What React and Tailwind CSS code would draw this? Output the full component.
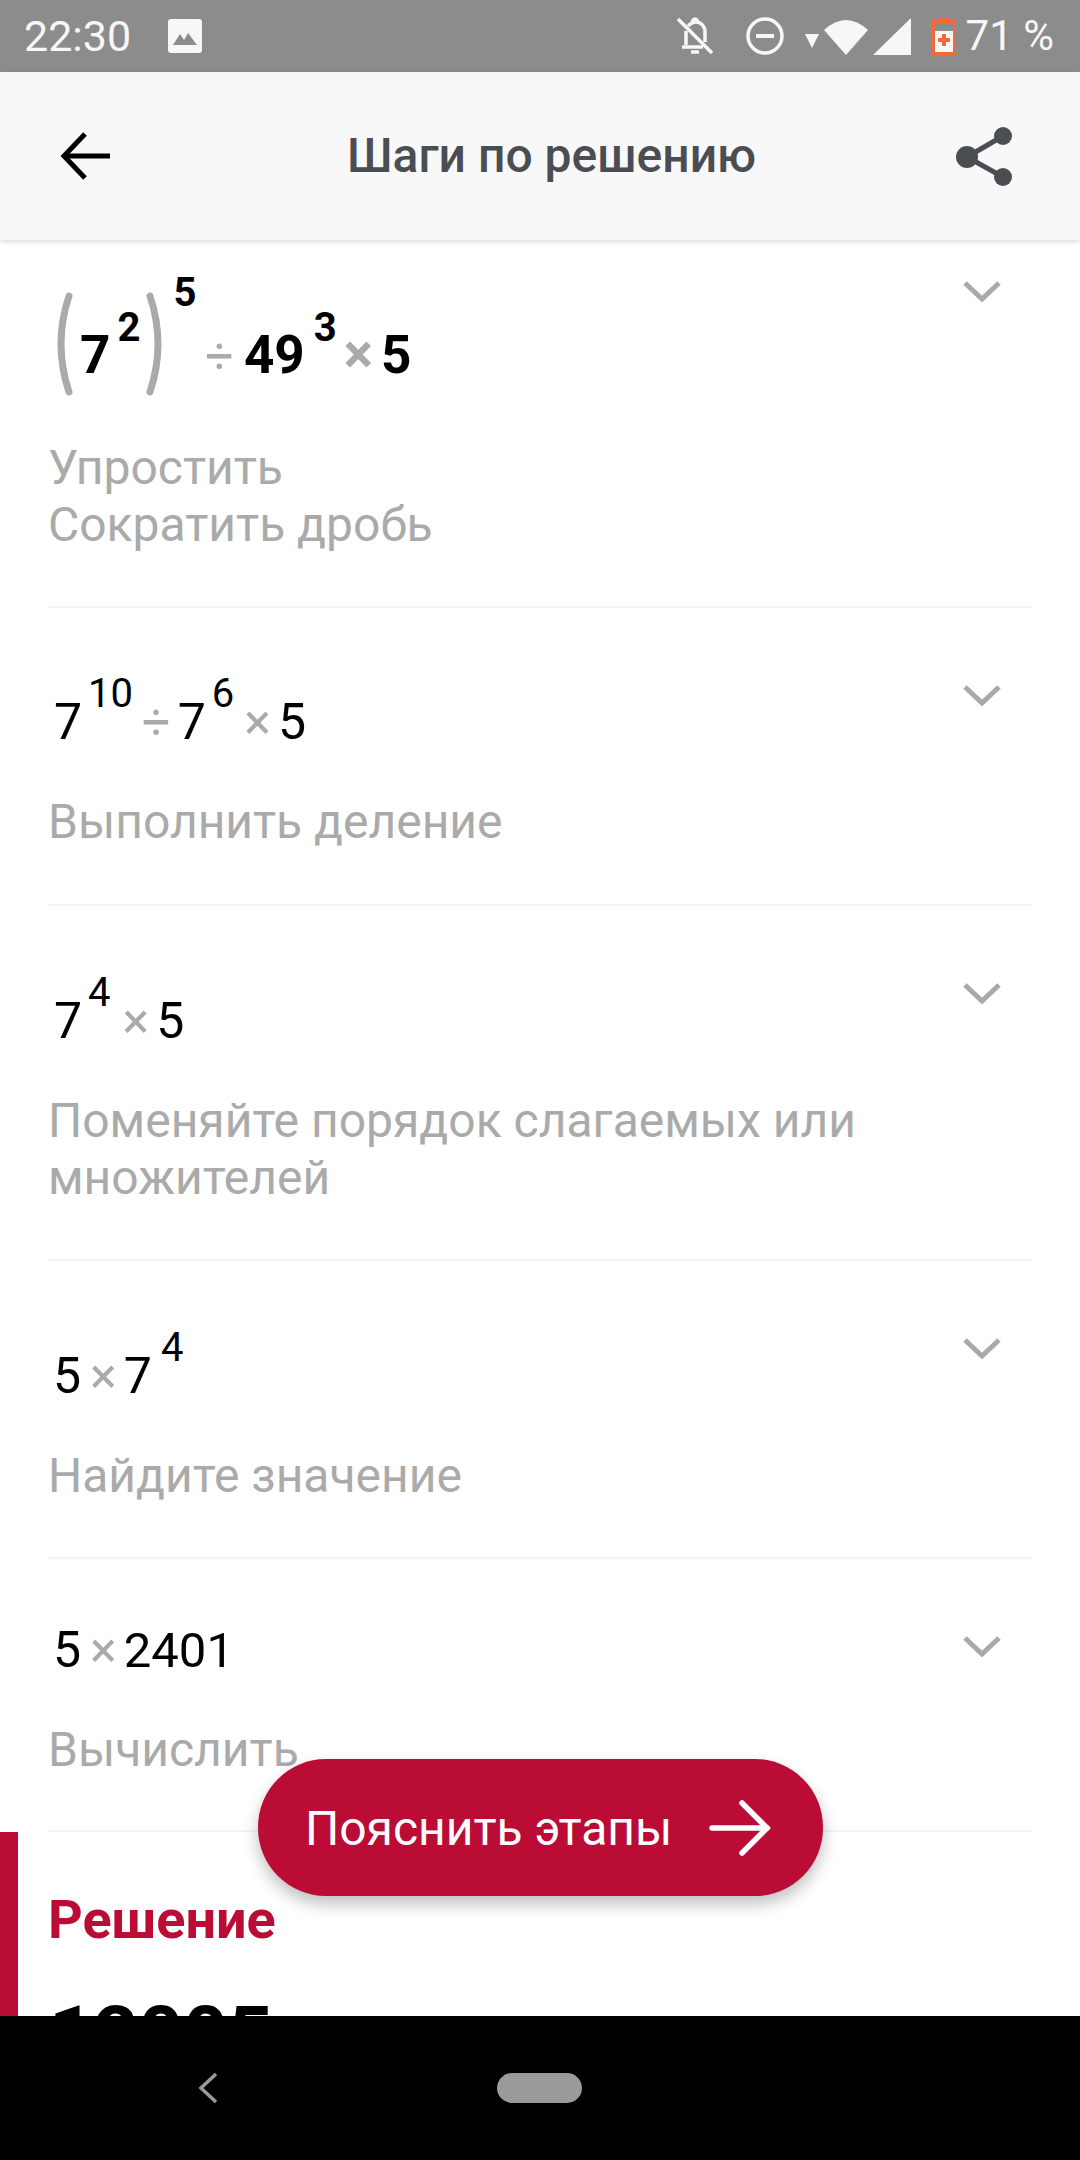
// App.jsx
function Chevron() {
  return (
    <svg width="40" height="22" viewBox="0 0 40 22" fill="none" className="mt-[76px] mr-[29px] shrink-0">
      <path d="M3 3 L20 19 L37 3" stroke="#a9a9a9" strokeWidth="5" />
    </svg>
  );
}

// superscript: sits on the same baseline, lifted up
function Sup({ children, bold, high, className = "" }) {
  return (
    <span
      className={`text-[40px] ${bold ? "font-bold" : ""} ${high ? "-translate-y-[67px]" : "-translate-y-[32px]"} ${className}`}
    >
      {children}
    </span>
  );
}

function Op({ children, className = "" }) {
  return <span className={`text-[#aaaaaa] text-[50px] ${className}`}>{children}</span>;
}

function Math({ children, className = "" }) {
  return (
    <div className={`flex items-baseline ml-[5px] text-black leading-[50px] ${className}`}>
      {children}
    </div>
  );
}

function Desc({ children, className = "" }) {
  return <p className={`-ml-[1px] text-[#aaaaaa] text-[48px] leading-[57px] ${className}`}>{children}</p>;
}

function Row({ children, className = "" }) {
  return (
    <section className={`mx-[49px] flex justify-between border-b-2 border-[#f3f3f3] ${className}`}>
      <div>{children}</div>
      <Chevron />
    </section>
  );
}

function Paren({ flip }) {
  return (
    <svg
      width="19"
      height="104"
      viewBox="0 0 19 104"
      fill="none"
      className={`translate-y-[23px] ${flip ? "-scale-x-100" : ""}`}
    >
      <path d="M15 4 Q-1 52 15 100" stroke="#aaaaaa" strokeWidth="7" strokeLinecap="round" />
    </svg>
  );
}

function StatusBar() {
  return (
    <div className="flex h-[72px] shrink-0 items-center bg-[#8c8c8c] pl-[24px] pr-[26px] text-[#f7f7f7]">
      <span className="text-[43px] leading-[72px]">22:30</span>
      <svg width="34" height="34" viewBox="0 0 34 34" className="ml-[37px]">
        <rect width="34" height="34" rx="3" fill="#f7f7f7" />
        <path d="M5 26 L12 15 L16 21 L20 14 L29 26 Z" fill="#8c8c8c" />
      </svg>
      <div className="ml-auto flex items-center">
        <svg width="38" height="38" viewBox="0 0 38 38" fill="none" stroke="#f7f7f7" strokeWidth="3.5">
          <path d="M2 2 L36 36" />
          <path d="M10 28 V14 M12 9 Q18 3 24 6 Q29 9 29 15 V25" />
          <path d="M6 30 H27" />
          <path d="M15 35 H23" />
          <path d="M16 5 Q19 -1 22 5" />
        </svg>
        <svg width="38" height="38" viewBox="0 0 38 38" fill="none" stroke="#f7f7f7" strokeWidth="3.5" className="ml-[32px]">
          <circle cx="19" cy="19" r="17" />
          <path d="M10 19 H28" strokeWidth="4" />
        </svg>
        <svg width="14" height="14" viewBox="0 0 14 14" className="ml-[21px] mt-[10px]">
          <path d="M0 0 H14 L7 14 Z" fill="#f7f7f7" />
        </svg>
        <svg width="44" height="37" viewBox="0 0 44 37" className="ml-[5px]">
          <path d="M0 12 Q22 -8 44 12 L22 37 Z" fill="#f7f7f7" />
        </svg>
        <svg width="38" height="37" viewBox="0 0 38 37" className="ml-[5px]">
          <path d="M38 0 V37 H0 Z" fill="#f7f7f7" />
        </svg>
        <svg width="24" height="38" viewBox="0 0 24 38" className="ml-[21px]">
          <path d="M7 0 H17 V3 H24 V38 H0 V3 H7 Z" fill="#f4693a" />
          <rect x="3" y="6" width="18" height="8" fill="#8c8c8c" />
          <rect x="3" y="14" width="18" height="21" fill="#f7f7f7" />
          <path d="M10 17 H14 V21 H18 V25 H14 V29 H10 V25 H6 V21 H10 Z" fill="#f4693a" />
        </svg>
        <span className="ml-[10px] text-[42px] leading-[72px]">71 %</span>
      </div>
    </div>
  );
}

function Header() {
  return (
    <header className="relative z-10 flex h-[168px] shrink-0 items-center bg-[#f8f8f8] pl-[60px] pr-[68px] shadow-[0_2px_5px_rgba(0,0,0,0.14)]">
      <svg width="50" height="48" viewBox="0 0 50 48" fill="none" stroke="#000" strokeWidth="5">
        <path d="M25 2 L4 24 L25 46" />
        <path d="M4 24 H50" />
      </svg>
      <h1 className="ml-[237px] text-[48px] font-medium leading-[60px] text-[#4a4d52]">Шаги по решению</h1>
      <svg width="56" height="59" viewBox="0 0 56 59" fill="#4a4d52" className="ml-auto">
        <circle cx="47" cy="9" r="9" />
        <circle cx="11" cy="30" r="11" />
        <circle cx="47" cy="50" r="9" />
        <path d="M47 9 L11 30 L47 50" fill="none" stroke="#4a4d52" strokeWidth="5" />
      </svg>
    </header>
  );
}

export default function App() {
  return (
    <div className="relative flex h-[2160px] w-[1080px] flex-col overflow-hidden bg-white font-['Roboto',sans-serif]">
      <StatusBar />
      <Header />

      <main className="flex-1 overflow-hidden">
        <div className="-mt-[36px]">
          <Row className="h-[404px]">
            <Math className="mt-[65px] text-[53px] font-bold">
              <Paren />
              <span className="ml-[7px]">7</span>
              <Sup bold className="ml-[7px]">2</Sup>
              <span className="ml-[6px]"><Paren flip /></span>
              <Sup bold high className="ml-[8px]">5</Sup>
              <Op className="ml-[9px] font-normal">÷</Op>
              <span className="ml-[10px]">49</span>
              <Sup bold className="ml-[9px]">3</Sup>
              <Op className="ml-[7px] text-[55px]">×</Op>
              <span className="ml-[8px]">5</span>
            </Math>
            <Desc className="mt-[54px]">Упростить<br />Сократить дробь</Desc>
          </Row>

          <Row className="h-[298px]">
            <Math className="mt-[89px] text-[50px]">
              <span>7</span>
              <Sup className="ml-[6px]">10</Sup>
              <Op className="ml-[9px]">÷</Op>
              <span className="ml-[7px]">7</span>
              <Sup className="ml-[6px]">6</Sup>
              <Op className="ml-[10px]">×</Op>
              <span className="ml-[7px]">5</span>
            </Math>
            <Desc className="mt-[42px]">Выполнить деление</Desc>
          </Row>

          <Row className="h-[355px]">
            <Math className="mt-[90px] text-[50px]">
              <span>7</span>
              <Sup className="ml-[6px]">4</Sup>
              <Op className="ml-[12px]">×</Op>
              <span className="ml-[7px]">5</span>
            </Math>
            <Desc className="mt-[42px]">
              Поменяйте порядок слагаемых или<br />множителей
            </Desc>
          </Row>

          <Row className="h-[298px]">
            <Math className="mt-[90px] text-[50px]">
              <span className="-ml-[1px]">5</span>
              <Op className="ml-[9px]">×</Op>
              <span className="ml-[7px]">7</span>
              <Sup className="ml-[9px]">4</Sup>
            </Math>
            <Desc className="mt-[42px]">Найдите значение</Desc>
          </Row>

          <Row className="h-[273px]">
            <Math className="mt-[66px] text-[50px]">
              <span className="-ml-[1px]">5</span>
              <Op className="ml-[9px]">×</Op>
              <span className="ml-[7px] text-[49px]">2401</span>
            </Math>
            <Desc className="mt-[45px]">Вычислить</Desc>
          </Row>

          <section className="h-[300px] border-l-[18px] border-[#ba0c35] pl-[30px] pt-[58px]">
            <h2 className="text-[54px] font-bold leading-[60px] text-[#ba0c35]">Решение</h2>
            <p className="ml-[1px] mt-[45px] text-[78px] font-bold leading-[80px] text-black">12005</p>
          </section>
        </div>
      </main>

      <nav className="relative z-10 flex h-[144px] shrink-0 items-start bg-black pl-[198px] pt-[57px]">
        <svg width="20" height="30" viewBox="0 0 20 30" fill="none" stroke="#999999" strokeWidth="3.5">
          <path d="M18 1 L3 15 L18 29" />
        </svg>
        <div className="ml-[279px] h-[30px] w-[85px] rounded-[15px] bg-[#9a9a9a]" />
      </nav>

      {/* floating action pill */}
      <button className="absolute left-[258px] top-[1759px] z-20 flex h-[137px] w-[565px] items-center rounded-[68px] bg-[#ba0c35] pl-[47px] shadow-[0_8px_16px_rgba(0,0,0,0.25)]">
        <span className="pt-[3px] text-[48px] leading-[60px] text-white">Пояснить этапы</span>
        <svg width="62" height="56" viewBox="0 0 62 56" fill="none" stroke="#fff" strokeWidth="5.5" strokeLinecap="round" className="ml-[37px]">
          <path d="M3 28 H58" />
          <path d="M33 3 L58 28 L33 53" />
        </svg>
      </button>
    </div>
  );
}
